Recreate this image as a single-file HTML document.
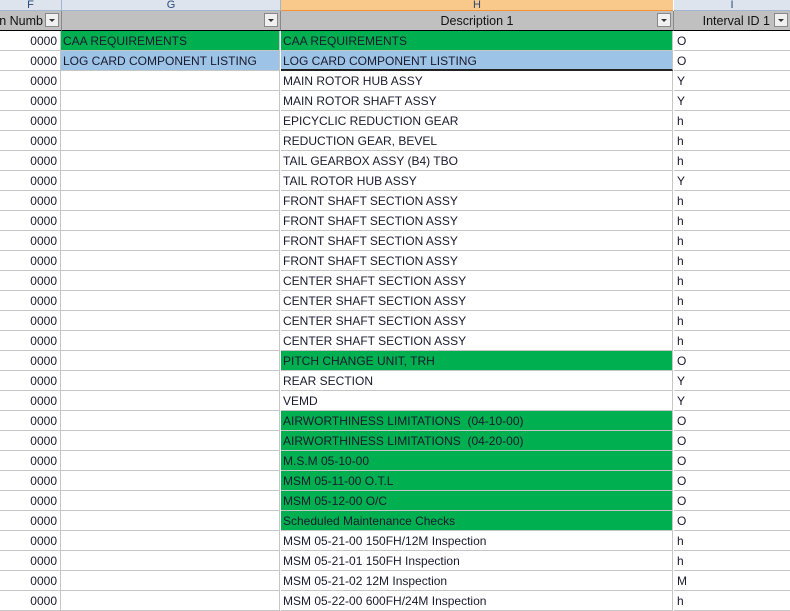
<!DOCTYPE html><html><head><style>
body{margin:0;width:790px;height:611px;overflow:hidden;background:#fff;font-family:"Liberation Sans",sans-serif;font-size:12px;color:#1a1a2e;position:relative}
.ch{position:absolute;top:0;height:10px;background:#dde4ee;border-bottom:1px solid #9eb6ce;font-size:11px;color:#2a4a7a;text-align:center;line-height:10px;overflow:hidden}
.hd{position:absolute;top:11px;height:19px;background:#c0c0c0;border-bottom:1px solid #000;line-height:20px;font-size:12.5px;color:#111;white-space:nowrap;overflow:hidden}
.fb{position:absolute;top:2px;right:2px;width:14px;height:14px;background:#f0f0f0;border:1px solid #888;box-sizing:border-box}
.fb:after{content:"";position:absolute;left:3px;top:5px;border-left:3px solid transparent;border-right:3px solid transparent;border-top:3px solid #333}
.r{position:absolute;left:0;width:790px;height:20px}
.c{position:absolute;top:0;height:19px;border-bottom:1px solid #c6c6c6;border-right:1px solid #c6c6c6;line-height:20px;white-space:nowrap;overflow:hidden;box-sizing:content-box;font-size:12px}
.f{left:0;width:57px;text-align:right;padding-right:3px}
.g{left:61px;width:216px;padding-left:2px}
.h{left:281px;width:389px;padding-left:2px}
.i{left:674px;width:114px;padding-left:3px;border-right:none}
.gr{background:#00b050}.bl{background:#9dc3e6}
</style></head><body>
<div class="ch" style="left:0;width:61px;border-right:1px solid #9eb6ce">F</div>
<div class="ch" style="left:62px;width:218px;border-right:1px solid #9eb6ce">G</div>
<div class="ch" style="left:281px;width:392px;background:#f8c98a;border-bottom-color:#f29436">H</div>
<div class="ch" style="left:674px;width:116px">I</div>
<div class="hd" style="left:0;width:61px;border-right:1px solid #888"><span style="position:absolute;right:18px">n Numb</span><div class="fb"></div></div>
<div class="hd" style="left:62px;width:218px;border-right:1px solid #888"><div class="fb"></div></div>
<div class="hd" style="left:281px;width:392px;border-right:1px solid #888;text-align:center">Description 1<div class="fb"></div></div>
<div class="hd" style="left:674px;width:116px"><span style="position:absolute;right:20px">Interval ID 1</span><div class="fb"></div></div>

<div class="r" style="top:31px"><div class="c f">0000</div><div class="c g gr">CAA REQUIREMENTS</div><div class="c h gr">CAA REQUIREMENTS</div><div class="c i">O</div></div>
<div class="r" style="top:51px"><div class="c f">0000</div><div class="c g bl">LOG CARD COMPONENT LISTING</div><div class="c h bl" style="border-bottom:2px solid #222;height:18px">LOG CARD COMPONENT LISTING</div><div class="c i">O</div></div>
<div class="r" style="top:71px"><div class="c f">0000</div><div class="c g"></div><div class="c h">MAIN ROTOR HUB ASSY</div><div class="c i">Y</div></div>
<div class="r" style="top:91px"><div class="c f">0000</div><div class="c g"></div><div class="c h">MAIN ROTOR SHAFT ASSY</div><div class="c i">Y</div></div>
<div class="r" style="top:111px"><div class="c f">0000</div><div class="c g"></div><div class="c h">EPICYCLIC REDUCTION GEAR</div><div class="c i">h</div></div>
<div class="r" style="top:131px"><div class="c f">0000</div><div class="c g"></div><div class="c h">REDUCTION GEAR, BEVEL</div><div class="c i">h</div></div>
<div class="r" style="top:151px"><div class="c f">0000</div><div class="c g"></div><div class="c h">TAIL GEARBOX ASSY (B4) TBO</div><div class="c i">h</div></div>
<div class="r" style="top:171px"><div class="c f">0000</div><div class="c g"></div><div class="c h">TAIL ROTOR HUB ASSY</div><div class="c i">Y</div></div>
<div class="r" style="top:191px"><div class="c f">0000</div><div class="c g"></div><div class="c h">FRONT SHAFT SECTION ASSY</div><div class="c i">h</div></div>
<div class="r" style="top:211px"><div class="c f">0000</div><div class="c g"></div><div class="c h">FRONT SHAFT SECTION ASSY</div><div class="c i">h</div></div>
<div class="r" style="top:231px"><div class="c f">0000</div><div class="c g"></div><div class="c h">FRONT SHAFT SECTION ASSY</div><div class="c i">h</div></div>
<div class="r" style="top:251px"><div class="c f">0000</div><div class="c g"></div><div class="c h">FRONT SHAFT SECTION ASSY</div><div class="c i">h</div></div>
<div class="r" style="top:271px"><div class="c f">0000</div><div class="c g"></div><div class="c h">CENTER SHAFT SECTION ASSY</div><div class="c i">h</div></div>
<div class="r" style="top:291px"><div class="c f">0000</div><div class="c g"></div><div class="c h">CENTER SHAFT SECTION ASSY</div><div class="c i">h</div></div>
<div class="r" style="top:311px"><div class="c f">0000</div><div class="c g"></div><div class="c h">CENTER SHAFT SECTION ASSY</div><div class="c i">h</div></div>
<div class="r" style="top:331px"><div class="c f">0000</div><div class="c g"></div><div class="c h">CENTER SHAFT SECTION ASSY</div><div class="c i">h</div></div>
<div class="r" style="top:351px"><div class="c f">0000</div><div class="c g"></div><div class="c h gr">PITCH CHANGE UNIT, TRH</div><div class="c i">O</div></div>
<div class="r" style="top:371px"><div class="c f">0000</div><div class="c g"></div><div class="c h">REAR SECTION</div><div class="c i">Y</div></div>
<div class="r" style="top:391px"><div class="c f">0000</div><div class="c g"></div><div class="c h">VEMD</div><div class="c i">Y</div></div>
<div class="r" style="top:411px"><div class="c f">0000</div><div class="c g"></div><div class="c h gr">AIRWORTHINESS LIMITATIONS&nbsp; (04-10-00)</div><div class="c i">O</div></div>
<div class="r" style="top:431px"><div class="c f">0000</div><div class="c g"></div><div class="c h gr">AIRWORTHINESS LIMITATIONS&nbsp; (04-20-00)</div><div class="c i">O</div></div>
<div class="r" style="top:451px"><div class="c f">0000</div><div class="c g"></div><div class="c h gr">M.S.M 05-10-00</div><div class="c i">O</div></div>
<div class="r" style="top:471px"><div class="c f">0000</div><div class="c g"></div><div class="c h gr">MSM 05-11-00 O.T.L</div><div class="c i">O</div></div>
<div class="r" style="top:491px"><div class="c f">0000</div><div class="c g"></div><div class="c h gr">MSM 05-12-00 O/C</div><div class="c i">O</div></div>
<div class="r" style="top:511px"><div class="c f">0000</div><div class="c g"></div><div class="c h gr">Scheduled Maintenance Checks</div><div class="c i">O</div></div>
<div class="r" style="top:531px"><div class="c f">0000</div><div class="c g"></div><div class="c h">MSM 05-21-00 150FH/12M Inspection</div><div class="c i">h</div></div>
<div class="r" style="top:551px"><div class="c f">0000</div><div class="c g"></div><div class="c h">MSM 05-21-01 150FH Inspection</div><div class="c i">h</div></div>
<div class="r" style="top:571px"><div class="c f">0000</div><div class="c g"></div><div class="c h">MSM 05-21-02 12M Inspection</div><div class="c i">M</div></div>
<div class="r" style="top:591px"><div class="c f">0000</div><div class="c g"></div><div class="c h">MSM 05-22-00 600FH/24M Inspection</div><div class="c i">h</div></div>
</body></html>
